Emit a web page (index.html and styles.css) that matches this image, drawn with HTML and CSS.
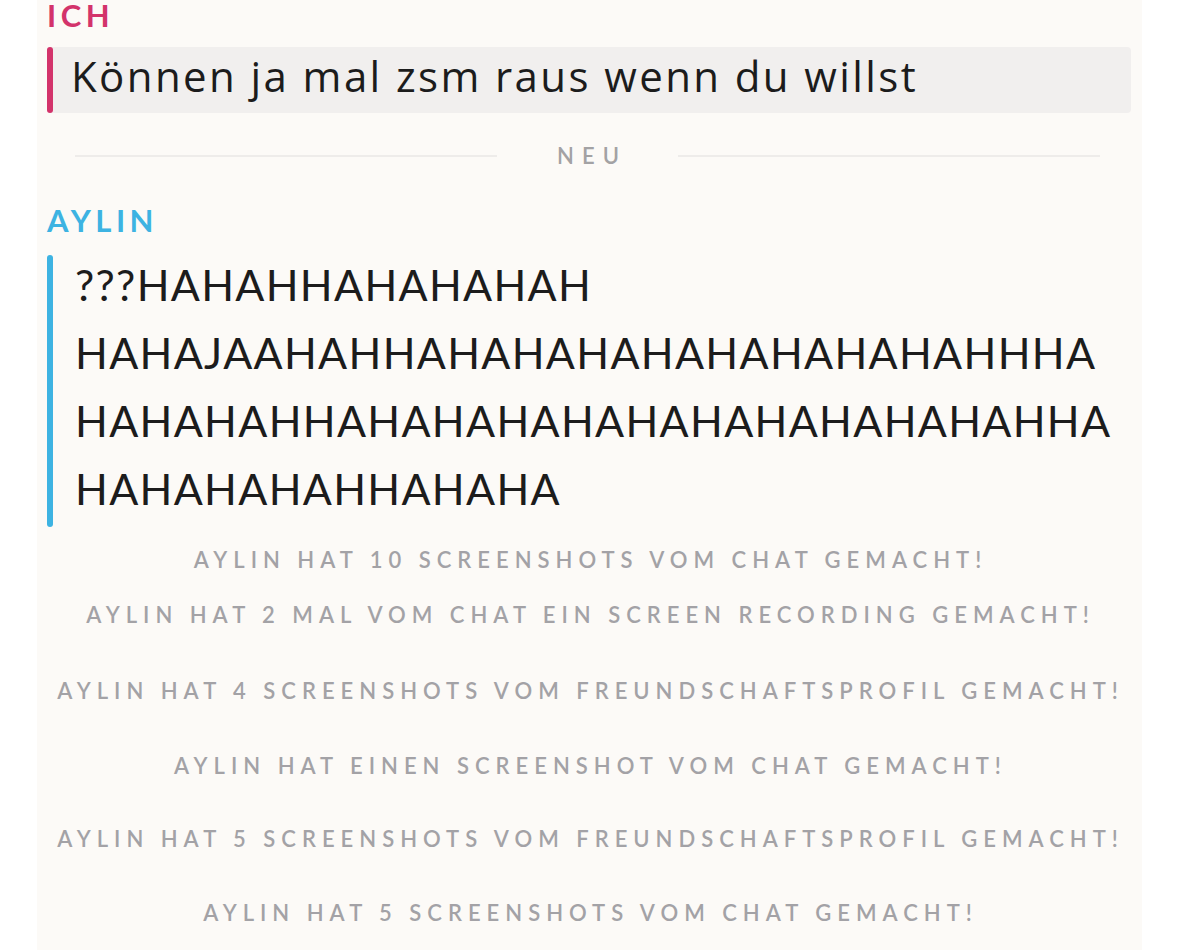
FILE: index.html
```html
<!DOCTYPE html>
<html lang="de">
<head>
<meta charset="utf-8">
<title>Chat</title>
<link rel="stylesheet" href="styles.css">
</head>
<body>
<div class="panel">
  <div class="sender me">ICH</div>
  <div class="bubble">
    <div class="bar me-bar"></div>
    <div class="msg single">Können ja mal zsm raus wenn du willst</div>
  </div>
  <div class="divider">
    <span class="line"></span>
    <span class="neu">NEU</span>
    <span class="line"></span>
  </div>
  <div class="sender other">AYLIN</div>
  <div class="thread">
    <div class="bar other-bar"></div>
    <div class="msg multi">
      <div>???HAHAHHAHAHAHAH</div>
      <div>HAHAJAAHAHHAHAHAHAHAHAHAHAHAHHHA</div>
      <div>HAHAHAHHAHAHAHAHAHAHAHAHAHAHAHHA</div>
      <div>HAHAHAHAHHAHAHA</div>
    </div>
  </div>
  <div class="notices">
    <div class="notice n1">AYLIN HAT 10 SCREENSHOTS VOM CHAT GEMACHT!</div>
    <div class="notice n2">AYLIN HAT 2 MAL VOM CHAT EIN SCREEN RECORDING GEMACHT!</div>
    <div class="notice n3">AYLIN HAT 4 SCREENSHOTS VOM FREUNDSCHAFTSPROFIL GEMACHT!</div>
    <div class="notice n4">AYLIN HAT EINEN SCREENSHOT VOM CHAT GEMACHT!</div>
    <div class="notice n5">AYLIN HAT 5 SCREENSHOTS VOM FREUNDSCHAFTSPROFIL GEMACHT!</div>
    <div class="notice n6">AYLIN HAT 5 SCREENSHOTS VOM CHAT GEMACHT!</div>
  </div>
</div>
</body>
</html>
```
FILE: styles.css
```css
html, body {
  margin: 0;
  padding: 0;
  background: #ffffff;
}
body {
  font-family: Lato, "Open Sans", sans-serif;
}
.panel {
  width: 1105px;
  height: 950px;
  margin-left: 37px;
  background: #fcfaf7;
  padding: 0 11px 0 10px;
  box-sizing: border-box;
  overflow: hidden;
}
.sender {
  font-weight: 700;
  font-size: 31px;
  line-height: 30px;
  letter-spacing: 4.5px;
}
.sender.me {
  color: #d3336b;
  margin-top: 0;
}
.sender.other {
  color: #3db3e2;
  margin-top: 36px;
}
.bubble {
  display: flex;
  margin-top: 17px;
  height: 66px;
  background: #f1efee;
  border-radius: 4px;
}
.bar {
  width: 6px;
  flex: none;
  border-radius: 3px;
}
.me-bar {
  background: #d3336b;
}
.other-bar {
  background: #3db3e2;
}
.msg {
  color: #1c1c1c;
}
.msg.single {
  font-family: "Open Sans", Lato, sans-serif;
  font-size: 42px;
  line-height: 58px;
  letter-spacing: 2.4px;
  padding-left: 18px;
  white-space: nowrap;
}
.divider {
  display: flex;
  align-items: center;
  margin: 30px 31px 0 28px;
  height: 26px;
}
.line {
  flex: 1;
  height: 2px;
  background: #eeecea;
}
.neu {
  color: #a3a2a4;
  font-size: 22px;
  line-height: 26px;
  letter-spacing: 8px;
  font-weight: 600;
  margin: 0 51px 0 60px;
}
.thread {
  display: flex;
  margin-top: 20px;
}
.msg.multi {
  font-size: 43px;
  line-height: 68px;
  letter-spacing: 1.3px;
  padding-left: 22px;
  margin-top: -4px;
  padding-bottom: 4px;
  white-space: nowrap;
}
.notices {
  text-align: center;
  color: #a3a2a6;
  font-size: 22px;
  letter-spacing: 6px;
  font-weight: 600;
  padding-left: 3px;
}
.notice {
  line-height: 24px;
  white-space: nowrap;
}
.n1 { margin-top: 21px; }
.n2 { margin-top: 31px; }
.n3 { margin-top: 52px; }
.n4 { margin-top: 51px; }
.n5 { margin-top: 49px; }
.n6 { margin-top: 50px; }
```
